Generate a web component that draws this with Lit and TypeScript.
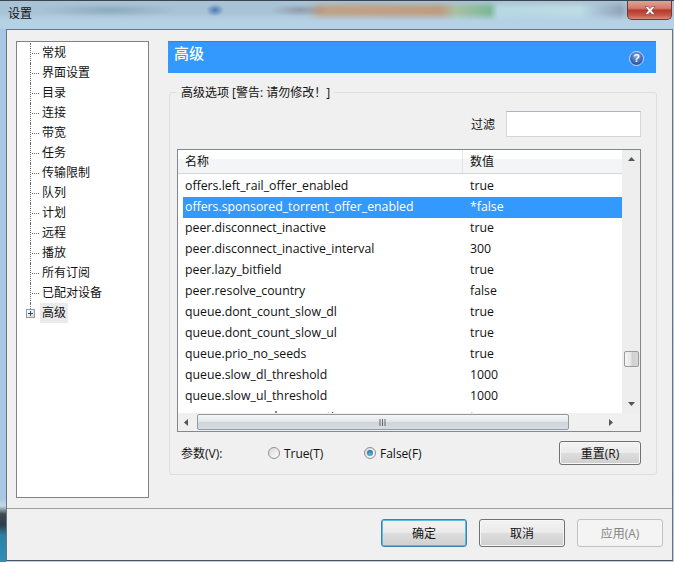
import { LitElement, html, css } from "lit";
import { customElement } from "lit/decorators.js";

const TREE = ["常规", "界面设置", "目录", "连接", "带宽", "任务", "传输限制", "队列", "计划", "远程", "播放", "所有订阅", "已配对设备"];
const ROWS: [string, string][] = [
  ["offers.left_rail_offer_enabled", "true"],
  ["offers.sponsored_torrent_offer_enabled", "*false"],
  ["peer.disconnect_inactive", "true"],
  ["peer.disconnect_inactive_interval", "300"],
  ["peer.lazy_bitfield", "true"],
  ["peer.resolve_country", "false"],
  ["queue.dont_count_slow_dl", "true"],
  ["queue.dont_count_slow_ul", "true"],
  ["queue.prio_no_seeds", "true"],
  ["queue.slow_dl_threshold", "1000"],
  ["queue.slow_ul_threshold", "1000"],
  ["queue.use_seed_peer_ratio", "true"],
];

@customElement("app-root")
export class AppRoot extends LitElement {
  static styles = css`
    :host {
      display: block;
      width: 674px;
      height: 562px;
      overflow: hidden;
      font-family: "Open Sans", "Noto Sans CJK SC", sans-serif;
      font-size: 12px;
      color: #111;
    }
    .window {
      width: 674px;
      height: 562px;
      display: flex;
      flex-direction: column;
      background: linear-gradient(180deg, #b9d4e6 0, #a9c8e4 88%, #b4cfe8 100%);
    }
    .edge {
      width: 6px;
      flex: none;
      align-self: stretch;
      background: linear-gradient(180deg, #a9c6e4 0, #a9c6e4 88%, #c5d8e8 89.5%, #3f4a52 91%, #2c3e4a 93%, #2d7fa6 95%, #2f8fb5 100%);
    }
    .title {
      height: 29px;
      flex: none;
      display: flex;
      align-items: flex-start;
      justify-content: space-between;
      padding-left: 8px;
      background:
        linear-gradient(180deg, #a9c3d6 0, rgba(169,195,214,0) 7px, rgba(181,209,230,0) 12px, #b5d1e6 20px),
        radial-gradient(ellipse 9px 7px at 215px 9px, #4f78b8 0, rgba(79,120,184,0) 100%),
        radial-gradient(ellipse 70px 8px at 110px 9px, rgba(120,150,170,.55) 0, rgba(120,150,170,0) 100%),
        radial-gradient(ellipse 30px 7px at 300px 9px, rgba(130,130,140,.6) 0, rgba(130,130,140,0) 100%),
        linear-gradient(90deg, rgba(190,170,150,0) 306px, #bfa48a 320px, #bd9e82 440px, #a9c0a6 456px, #7db896 490px, #b5d8e2 498px, #bddbe3 580px, #a6bfd3 600px, #94a6b8 620px, #a9c4dc 630px),
        #a9c3d6;
      border-top: 1px solid #3c4650;
      box-sizing: border-box;
    }
    .title-text { font-size: 12px; line-height: 26px; color: #111; }
    .close {
      width: 45px;
      height: 19px;
      margin-right: 2px;
      box-sizing: border-box;
      border: 1px solid #6d3a34;
      border-top: none;
      border-radius: 0 0 5px 5px;
      background: linear-gradient(180deg, #e2a196 0, #cf7c6d 40%, #b8382a 52%, #c65a4c 80%, #d78b7b 100%);
      display: flex;
      align-items: center;
      justify-content: center;
    }
    .body { flex: 1; display: flex; min-height: 0; }
    .client {
      flex: 1;
      min-width: 0;
      margin: 0 1px 1px 0;
      box-sizing: border-box;
      border: 1px solid #6a7480;
      border-bottom-color: #4a5560;
      background: #f0f0f0;
      display: flex;
      flex-direction: column;
    }
    .main { flex: 1; display: flex; padding: 11px 0 0 9px; gap: 19px; min-height: 0; }
    .tree {
      width: 133px;
      height: 457px;
      box-sizing: border-box;
      border: 1px solid #828282;
      background: #fff;
      padding: 1px 0 0 9px;
    }
    .node { display: flex; align-items: stretch; height: 20px; }
    .conn {
      width: 10px;
      margin-left: 4px;
      box-sizing: border-box;
      border-left: 1px dotted #707070;
      background: repeating-linear-gradient(90deg, #707070 0 1px, transparent 1px 2px) no-repeat 1px 10px / 9px 1px;
    }
    .label { padding: 0 2px; line-height: 20px; white-space: nowrap; }
    .last .label { background: #ebebeb; }
    .expander { width: 14px; display: flex; flex-direction: column; }
    .stub { margin-left: 4px; height: 6px; border-left: 1px dotted #707070; }
    .plus {
      width: 9px;
      height: 9px;
      box-sizing: border-box;
      border: 1px solid #909aa5;
      background: linear-gradient(135deg, #fff, #d8d8d8);
      display: flex;
      align-items: center;
      justify-content: center;
    }
    .plus svg { display: block; }

    .right { width: 489px; display: flex; flex-direction: column; }
    .header {
      height: 32px;
      margin-right: 1px;
      box-sizing: border-box;
      border-top: 1px solid #5b7a99;
      background: #3399ff;
      color: #fff;
      font-size: 15px;
      font-weight: 500;
      padding: 1px 12px 0 6px;
      display: flex;
      justify-content: space-between;
      line-height: 20px;
    }
    .help {
      width: 15px;
      height: 15px;
      margin-top: 8px;
      border-radius: 50%;
      background: radial-gradient(circle at 50% 30%, #7ea6dc, #2c55a5 75%);
      border: 1px solid #c5d8f2;
      box-sizing: border-box;
      color: #fff;
      font: bold 11px/13px "Liberation Sans", sans-serif;
      text-align: center;
    }
    .group {
      margin: 19px 0 0 1px;
      width: 488px;
      height: 383px;
      box-sizing: border-box;
      border: 1px solid #dcdfe1;
      border-radius: 3px;
      padding: 0 15px 0 7px;
      display: flex;
      flex-direction: column;
    }
    .legend {
      margin: -8px 0 0 0;
      padding: 0 4px;
      align-self: flex-start;
      background: #f0f0f0;
      line-height: 16px;
      font-size: 12px;
    }
    .filter { display: flex; justify-content: flex-end; align-items: center; gap: 11px; margin-top: 10px; height: 26px; }
    .input { width: 135px; height: 26px; box-sizing: border-box; border: 1px solid #d4d7da; border-top-color: #b0b4b8; background: #fff; }
    .list {
      margin-top: 12px;
      width: 464px;
      height: 283px;
      box-sizing: border-box;
      border: 1px solid #828790;
      background: #fff;
      display: grid;
      grid-template-columns: minmax(0, 1fr) 18px;
      grid-template-rows: minmax(0, 1fr) 18px;
    }
    .table { overflow: hidden; min-width: 0; }
    .thead {
      height: 24px;
      display: flex;
      box-sizing: border-box;
      border-bottom: 1px solid #d5d5d5;
      background: linear-gradient(180deg, #fff 0, #fff 40%, #f4f5f7 41%, #f4f5f7 100%);
      line-height: 24px;
    }
    .th1 { width: 285px; padding-left: 7px; box-sizing: border-box; border-right: 1px solid #e3e5e8; }
    .th2 { padding-left: 7px; }
    .tbody { padding: 2px 0 0 5px; }
    .row { display: flex; height: 21px; line-height: 20px; white-space: nowrap; font-size: 12.3px; }
    .c1 { width: 285px; padding-left: 2px; box-sizing: border-box; }
    .c2 { padding-left: 2px; flex: 1; }
    .row.sel { background: #3399ff; color: #fff; }
    .vbar {
      background: #eeeeee;
      display: flex;
      flex-direction: column;
      align-items: center;
      padding: 7px 0;
      box-sizing: border-box;
    }
    .vthumb {
      width: 15px;
      height: 16px;
      margin-top: 190px;
      box-sizing: border-box;
      border: 1px solid #9a9a9a;
      border-radius: 2px;
      background: linear-gradient(90deg, #f4f4f4 0, #e6e6e6 45%, #cfcfcf 55%, #d8d8d8 100%);
      margin-bottom: auto;
    }
    .hbar {
      background: #f0f0f0;
      display: flex;
      align-items: center;
      padding-left: 6px;
      box-sizing: border-box;
    }
    .hthumb {
      margin-left: 9px;
      width: 372px;
      height: 16px;
      box-sizing: border-box;
      border: 1px solid #8f9aa3;
      border-radius: 2px;
      background: linear-gradient(180deg, #f3f5f7 0, #e4e8ec 45%, #cdd4da 55%, #d8dde2 100%);
      display: flex;
      align-items: center;
      justify-content: center;
    }
    .harrow-r { margin-left: 40px; }
    .corner { background: #f0f0f0; }
    .params { display: flex; align-items: center; height: 24px; margin-top: 9px; }
    .params .p-label { width: 87px; margin-left: 4px; }
    .radio { display: flex; align-items: center; gap: 4px; }
    .r1 { width: 96px; }
    .r2 { width: 195px; }
    .dot {
      width: 12px;
      height: 12px;
      box-sizing: border-box;
      border-radius: 50%;
      border: 1px solid #8e8f8f;
      background: linear-gradient(135deg, #d8d8d8, #fff);
      display: flex;
      align-items: center;
      justify-content: center;
    }
    .dot.on::after {
      content: "";
      width: 6px;
      height: 6px;
      border-radius: 50%;
      background: radial-gradient(circle at 50% 70%, #4fc0e8, #1d5a8c);
    }
    .btn {
      box-sizing: border-box;
      height: 28px;
      width: 86px;
      border: 1px solid #707070;
      border-radius: 3px;
      background: linear-gradient(180deg, #f2f2f2 0, #ebebeb 48%, #dddddd 52%, #cfcfcf 100%);
      display: flex;
      align-items: center;
      justify-content: center;
      box-shadow: inset 0 0 0 1px #f7f7f7;
    }
    .btn.reset { width: 82px; height: 24px; }
    .btn.def { border-color: #3c7fb1; box-shadow: inset 0 0 0 1px #58bfe0; }
    .btn.dis { border-color: #bfc2c4; background: #f4f4f4; color: #838383; box-shadow: none; }
    .footer {
      height: 52px;
      flex: none;
      box-sizing: border-box;
      border-top: 1px solid #a0a0a0;
      display: flex;
      justify-content: flex-end;
      gap: 12px;
      padding: 10px 9px 0 0;
    }
  `;

  render() {
    return html`
      <div class="window">
        <div class="title">
          <span class="title-text">设置</span>
          <div class="close">
            <svg width="14" height="11" viewBox="0 0 14 11"><path d="M2 1.5h3l2 2.2 2-2.2h3L8.8 5.5 12 9.5H9L7 7.3 5 9.5H2l3.2-4z" fill="#fff" stroke="#7a3a32" stroke-width=".6"/></svg>
          </div>
        </div>
        <div class="body">
          <div class="edge"></div>
          <div class="client">
            <div class="main">
              <div class="tree">
                ${TREE.map(t => html`<div class="node"><span class="conn"></span><span class="label">${t}</span></div>`)}
                <div class="node last">
                  <div class="expander">
                    <div class="stub"></div>
                    <div class="plus"><svg width="7" height="7" viewBox="0 0 7 7"><path d="M1 3.5h5M3.5 1v5" stroke="#3a4a5a" stroke-width="1"/></svg></div>
                  </div>
                  <span class="label">高级</span>
                </div>
              </div>
              <div class="right">
                <div class="header"><span>高级</span><span class="help">?</span></div>
                <div class="group">
                  <span class="legend">高级选项 [警告: 请勿修改！]</span>
                  <div class="filter"><span>过滤</span><div class="input"></div></div>
                  <div class="list">
                    <div class="table">
                      <div class="thead"><div class="th1">名称</div><div class="th2">数值</div></div>
                      <div class="tbody">
                        ${ROWS.map(([a, b]) => html`<div class="row ${a.includes("sponsored") ? "sel" : ""}"><span class="c1">${a}</span><span class="c2">${b}</span></div>`)}
                      </div>
                    </div>
                    <div class="vbar">
                      <svg width="7" height="4" viewBox="0 0 7 4"><path d="M3.5 0L7 4H0z" fill="#555"/></svg>
                      <div class="vthumb"></div>
                      <svg width="7" height="4" viewBox="0 0 7 4"><path d="M3.5 4L7 0H0z" fill="#555"/></svg>
                    </div>
                    <div class="hbar">
                      <svg width="4" height="7" viewBox="0 0 4 7"><path d="M0 3.5L4 0v7z" fill="#555"/></svg>
                      <div class="hthumb"><svg width="8" height="7" viewBox="0 0 8 7"><path d="M1 0v7M3.5 0v7M6 0v7" stroke="#666" stroke-width="1"/></svg></div>
                      <svg class="harrow-r" width="4" height="7" viewBox="0 0 4 7"><path d="M4 3.5L0 0v7z" fill="#555"/></svg>
                    </div>
                    <div class="corner"></div>
                  </div>
                  <div class="params">
                    <span class="p-label">参数(V):</span>
                    <label class="radio r1"><span class="dot"></span>True(T)</label>
                    <label class="radio r2"><span class="dot on"></span>False(F)</label>
                    <div class="btn reset">重置(R)</div>
                  </div>
                </div>
              </div>
            </div>
            <div class="footer">
              <div class="btn def">确定</div>
              <div class="btn">取消</div>
              <div class="btn dis">应用(A)</div>
            </div>
          </div>
        </div>
      </div>
    `;
  }
}
